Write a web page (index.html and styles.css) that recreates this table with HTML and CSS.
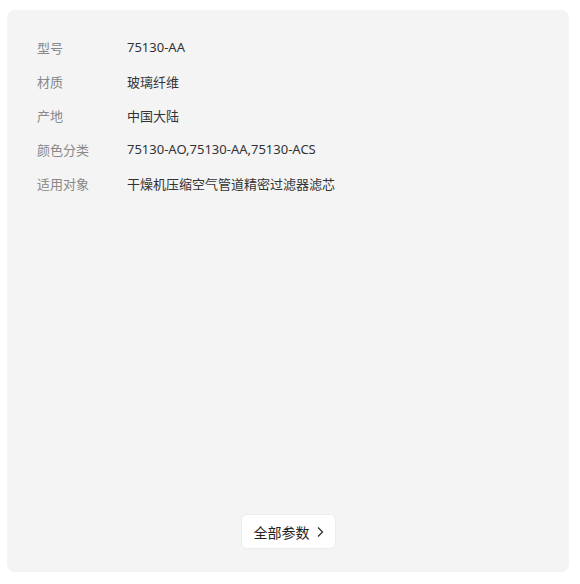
FILE: index.html
```html
<!DOCTYPE html>
<html lang="zh-CN">
<head>
    <meta charset="UTF-8">
    <meta name="viewport" content="width=device-width, initial-scale=1.0">
    <title>商品参数</title>
    <link rel="stylesheet" href="styles.css">
</head>
<body>
    <div class="params-panel">
        <ul class="params-list">
            <li class="param-row">
                <span class="param-label">型号</span>
                <span class="param-value">75130-AA</span>
            </li>
            <li class="param-row">
                <span class="param-label">材质</span>
                <span class="param-value">玻璃纤维</span>
            </li>
            <li class="param-row">
                <span class="param-label">产地</span>
                <span class="param-value">中国大陆</span>
            </li>
            <li class="param-row">
                <span class="param-label">颜色分类</span>
                <span class="param-value">75130-AO,75130-AA,75130-ACS</span>
            </li>
            <li class="param-row">
                <span class="param-label">适用对象</span>
                <span class="param-value">干燥机压缩空气管道精密过滤器滤芯</span>
            </li>
        </ul>

        <div class="panel-footer">
            <button class="btn-all">
                全部参数
                <svg class="btn-arrow" width="8" height="12" viewBox="0 0 8 12">
                    <path d="M2 1.5 L6.5 6 L2 10.5" fill="none" stroke="#333" stroke-width="1.3"/>
                </svg>
            </button>
        </div>
    </div>
</body>
</html>
```

FILE: styles.css
```css
* {
    margin: 0;
    padding: 0;
    box-sizing: border-box;
}

body {
    font-family: "Noto Sans", "Noto Sans CJK SC", sans-serif;
    background-color: #ffffff;
    color: #333;
    padding: 10px 11px 12px 7px;
}

.params-panel {
    background-color: #f4f4f4;
    border-radius: 8px;
    height: 562px;
    padding: 20px 30px 23px;
    display: flex;
    flex-direction: column;
}

.params-list {
    list-style: none;
}

.param-row {
    display: flex;
    height: 34px;
    align-items: center;
    font-size: 13px;
}

.param-label {
    width: 90px;
    color: #888;
}

.param-value {
    color: #333;
}

.panel-footer {
    margin-top: auto;
    display: flex;
    justify-content: center;
}

.btn-all {
    display: inline-flex;
    align-items: center;
    gap: 6px;
    height: 35px;
    padding: 0 11px 0 12px;
    background-color: #ffffff;
    border: 1px solid #ececec;
    border-radius: 6px;
    font-family: inherit;
    font-size: 14px;
    color: #222;
    cursor: pointer;
}
```
